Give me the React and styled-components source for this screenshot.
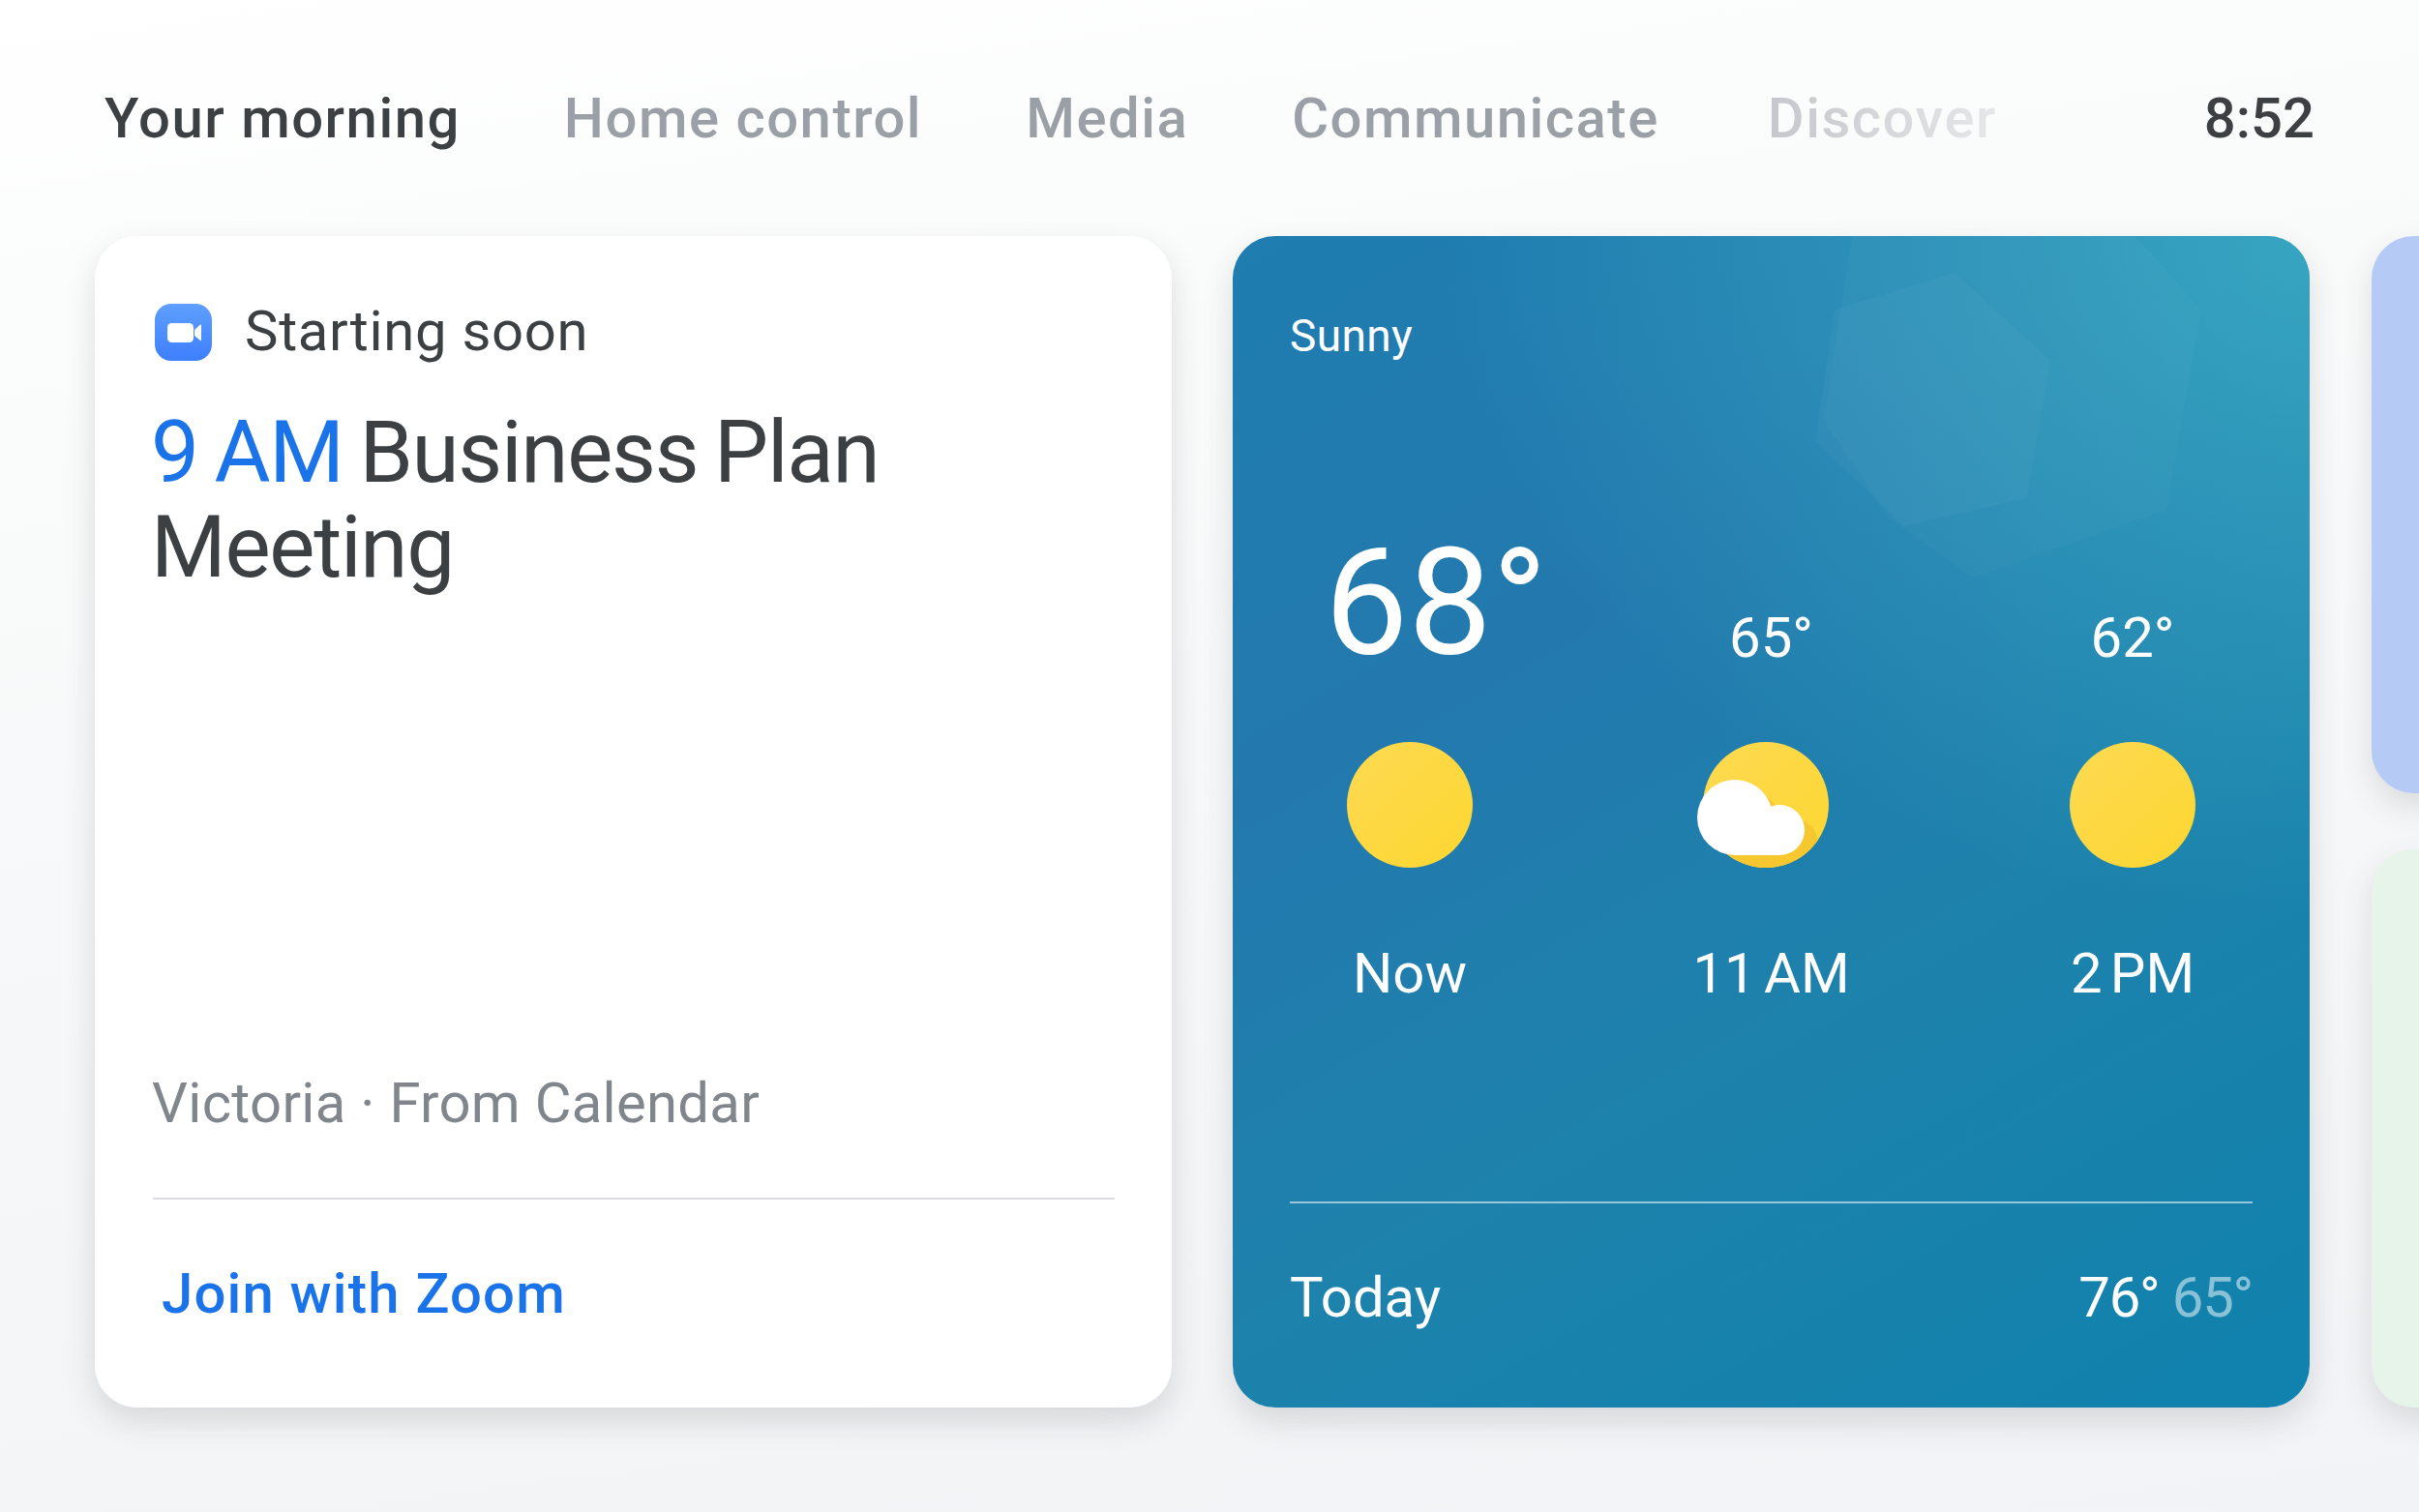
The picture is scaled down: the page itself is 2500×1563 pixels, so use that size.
import styled, { createGlobalStyle } from "styled-components";

const GlobalStyle = createGlobalStyle`
  html, body {
    margin: 0;
    padding: 0;
    background: #f3f4f6;
  }
  * {
    box-sizing: border-box;
  }
`;

const Page = styled.div`
  width: 2500px;
  height: 1563px;
  overflow: hidden;
  padding-top: 88px;
  background: linear-gradient(172deg, #ffffff 0%, #f9fafa 30%, #f2f3f6 100%);
  font-family: Roboto, "Open Sans", Arial, sans-serif;
  color: #3c4043;
`;

const Nav = styled.nav`
  display: flex;
  align-items: center;
  gap: 107px;
  height: 68px;
  padding: 0 108px 0 108px;
`;

const NavItem = styled.span`
  font-size: 58px;
  line-height: 68px;
  font-weight: 500;
  letter-spacing: 1.5px;
  color: ${(p) => (p.$active ? "#3c4043" : "#9aa0a6")};
`;

const FadedNavItem = styled(NavItem)`
  margin-left: 5px;
  background: linear-gradient(90deg, #c4c7cb 0%, #e6e7e9 100%);
  -webkit-background-clip: text;
  background-clip: text;
  color: transparent;
`;

const Clock = styled(NavItem)`
  margin-left: auto;
  letter-spacing: 0;
  color: #3c4043;
`;

const CardRow = styled.div`
  display: flex;
  gap: 63px;
  margin-top: 88px;
  padding-left: 98px;
`;

const CardShadow = styled.div`
  flex: 0 0 1113px;
  border-radius: 44px;
  box-shadow: 0 14px 32px rgba(60, 64, 67, 0.16);
`;

const Card = styled.section`
  position: relative;
  height: 1211px;
  border-radius: 44px;
  overflow: hidden;
  display: flex;
  flex-direction: column;
`;

const MeetingCard = styled(Card)`
  background: #fff;
  padding: 68px 59px 0 60px;
`;

const SourceRow = styled.div`
  display: flex;
  align-items: center;
  gap: 34px;
  height: 60px;
  font-size: 58px;
  font-weight: 400;
  letter-spacing: 0.7px;
`;

const LogoSlot = styled.span`
  display: flex;
  margin: 2px 0 0 2px;
`;

const MeetingTitle = styled.h1`
  margin: 47px 0 0 -2px;
  font-size: 89px;
  line-height: 98px;
  font-weight: 400;
  letter-spacing: -1.3px;
  word-spacing: -4px;
  max-width: 800px;
`;

const TimeText = styled.span`
  color: #1a73e8;
`;

const MeetingFooter = styled.div`
  margin-top: auto;
`;

const Origin = styled.div`
  font-size: 58px;
  line-height: 68px;
  font-weight: 400;
  letter-spacing: 0.3px;
  margin-left: -1px;
  color: #80868b;
`;

const Divider = styled.hr`
  margin: 0;
  border: 0;
  height: 2px;
  background: ${(p) => p.$color};
`;

const OriginDivider = styled(Divider)`
  margin-top: 64px;
`;

const JoinLink = styled.a`
  display: block;
  padding: 63px 0 84px 9px;
  font-size: 58px;
  line-height: 68px;
  font-weight: 500;
  letter-spacing: 1.2px;
  color: #1a73e8;
`;

const WeatherCard = styled(Card)`
  padding: 0 59px;
  color: #fff;
  background: linear-gradient(
    150deg,
    #1f7db0 0%,
    #2379ae 32%,
    #1d82ac 62%,
    #0f82ad 100%
  );
`;

const WeatherGlow = styled.div`
  position: absolute;
  inset: 0;
  background: radial-gradient(
    900px 700px at 100% 0%,
    rgba(62, 180, 200, 0.75) 0%,
    rgba(62, 180, 200, 0) 100%
  );
`;

const Facets = styled.svg`
  position: absolute;
  top: 0;
  left: 0;
`;

const WeatherBody = styled.div`
  position: relative;
  display: flex;
  flex-direction: column;
  height: 100%;
`;

const Condition = styled.div`
  margin-top: 76px;
  font-size: 46px;
  line-height: 54px;
  letter-spacing: 0.4px;
`;

const Forecast = styled.div`
  display: flex;
  justify-content: space-between;
  height: 722px;
  margin-top: 146px;
`;

const Slot = styled.div`
  width: 248px;
  display: flex;
  flex-direction: column;
  align-items: center;
`;

const TempBox = styled.div`
  display: flex;
  align-items: flex-end;
  justify-content: center;
  height: 224px;
  margin-left: ${(p) => (p.$large ? "54px" : "0")};
  padding-bottom: ${(p) => (p.$large ? "43px" : "56px")};
  font-size: ${(p) => (p.$large ? "154px" : "58px")};
  line-height: 1;
  font-weight: 400;
`;

const SlotLabel = styled.div`
  margin-top: 75px;
  font-size: 58px;
  line-height: 68px;
  font-weight: 400;
  word-spacing: -6px;
`;

const WeatherIcon = styled.svg`
  display: block;
  margin-top: 23px;
  overflow: visible;
`;

const ShiftedIcon = styled(WeatherIcon)`
  margin-left: -11px;
`;

const Summary = styled.div`
  display: flex;
  justify-content: space-between;
  align-items: center;
  margin-top: 63px;
  font-size: 58px;
  line-height: 68px;
  font-weight: 400;
`;

const HighLow = styled.span`
  letter-spacing: -1.2px;
`;

const LowTemp = styled.span`
  color: rgba(255, 255, 255, 0.5);
`;

const PeekColumn = styled.div`
  flex: 0 0 200px;
  display: flex;
  flex-direction: column;
  gap: 58px;
  height: 1211px;
  margin-left: 1px;
`;

const PeekCard = styled.div`
  height: ${(p) => p.$height}px;
  border-radius: 44px 0 0 44px;
  background: ${(p) => p.$color};
  box-shadow: 0 14px 32px rgba(60, 64, 67, 0.14);
`;

const SunDefs = () => (
  <defs>
    <linearGradient id="sun" x1="0.1" y1="0.1" x2="0.9" y2="0.9">
      <stop offset="0" stopColor="#fdd94f" />
      <stop offset="1" stopColor="#fdd733" />
    </linearGradient>
    <clipPath id="sunDisc">
      <circle cx="65" cy="65" r="65" />
    </clipPath>
  </defs>
);

const Sun = () => (
  <WeatherIcon width="130" height="130" viewBox="0 0 130 130">
    <SunDefs />
    <circle cx="65" cy="65" r="65" fill="url(#sun)" />
  </WeatherIcon>
);

const Cloud = ({ fill }) => (
  <g fill={fill}>
    <circle cx="33" cy="78" r="39" />
    <circle cx="79" cy="91" r="26" />
    <rect x="33" y="80" width="46" height="37" />
  </g>
);

const CloudySun = () => (
  <ShiftedIcon width="130" height="130" viewBox="0 0 130 130">
    <SunDefs />
    <circle cx="65" cy="65" r="65" fill="url(#sun)" />
    <g clipPath="url(#sunDisc)">
      <g transform="translate(14 14)">
        <Cloud fill="#f7c72f" />
      </g>
    </g>
    <Cloud fill="#fff" />
  </ShiftedIcon>
);

const ZoomIcon = () => (
  <svg width="59" height="59" viewBox="0 0 59 59">
    <defs>
      <linearGradient id="zoom" x1="0" y1="0" x2="0" y2="1">
        <stop offset="0" stopColor="#5f9fff" />
        <stop offset="1" stopColor="#3d7fff" />
      </linearGradient>
    </defs>
    <rect width="59" height="59" rx="17" fill="url(#zoom)" />
    <rect x="13" y="20" width="27" height="20" rx="4.5" fill="#fff" />
    <path d="M41 27 L47 21.5 Q48 21 48 22.5 V37 Q48 38.5 47 38 L41 33 Z" fill="#fff" />
  </svg>
);

function App() {
  return (
    <Page>
      <GlobalStyle />
      <Nav>
        <NavItem $active>Your morning</NavItem>
        <NavItem>Home control</NavItem>
        <NavItem>Media</NavItem>
        <NavItem>Communicate</NavItem>
        <FadedNavItem>Discover</FadedNavItem>
        <Clock>8:52</Clock>
      </Nav>

      <CardRow>
        <CardShadow>
          <MeetingCard>
            <SourceRow>
              <LogoSlot>
                <ZoomIcon />
              </LogoSlot>
              Starting soon
            </SourceRow>
            <MeetingTitle>
              <TimeText>9 AM</TimeText> Business Plan Meeting
            </MeetingTitle>
            <MeetingFooter>
              <Origin>Victoria · From Calendar</Origin>
              <OriginDivider $color="#dadce0" />
              <JoinLink>Join with Zoom</JoinLink>
            </MeetingFooter>
          </MeetingCard>
        </CardShadow>

        <CardShadow>
          <WeatherCard>
            <WeatherGlow />
            <Facets width="1113" height="400" viewBox="0 0 1113 400">
              <polygon
                points="746,38 622,76 602,212 694,300 821,271 845,129"
                fill="rgba(255,255,255,0.03)"
              />
              <polygon
                points="640,0 933,0 1001,76 965,283 765,353 678,291 610,190"
                fill="rgba(255,255,255,0.025)"
              />
            </Facets>
            <WeatherBody>
              <Condition>Sunny</Condition>
              <Forecast>
                <Slot>
                  <TempBox $large>68°</TempBox>
                  <Sun />
                  <SlotLabel>Now</SlotLabel>
                </Slot>
                <Slot>
                  <TempBox>65°</TempBox>
                  <CloudySun />
                  <SlotLabel>11 AM</SlotLabel>
                </Slot>
                <Slot>
                  <TempBox>62°</TempBox>
                  <Sun />
                  <SlotLabel>2 PM</SlotLabel>
                </Slot>
              </Forecast>
              <Divider $color="rgba(255,255,255,0.55)" />
              <Summary>
                <span>Today</span>
                <HighLow>
                  76° <LowTemp>65°</LowTemp>
                </HighLow>
              </Summary>
            </WeatherBody>
          </WeatherCard>
        </CardShadow>

        <PeekColumn>
          <PeekCard $height={576} $color="#b5cbf5" />
          <PeekCard $height={577} $color="#e6f4ea" />
        </PeekColumn>
      </CardRow>
    </Page>
  );
}

export default App;
